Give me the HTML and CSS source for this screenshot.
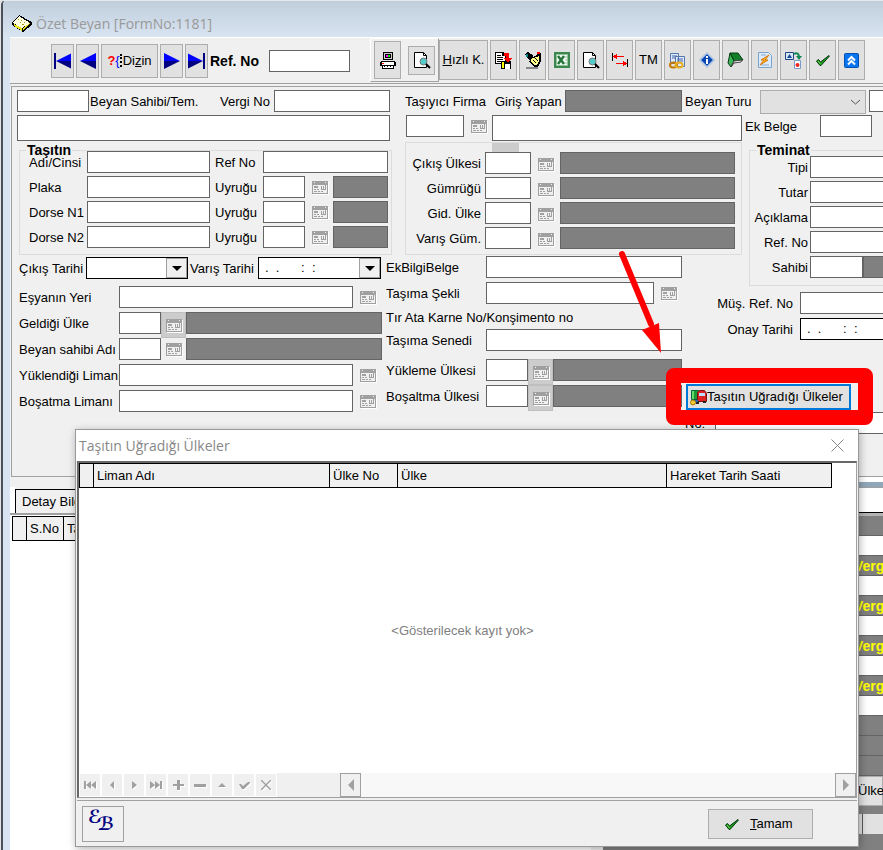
FILE: index.html
```html
<!DOCTYPE html>
<html lang="tr">
<head>
  <meta charset="UTF-8" />
  <meta name="viewport" content="width=device-width, initial-scale=1.0"/>
  <title>Özet Beyan</title>
  <link rel="stylesheet" href="styles.css">
</head>
<body>
  <svg class="defs" aria-hidden="true">
    <symbol id="cal" viewBox="0 0 17 14">
      <path fill="#fff" d="M1 1h16v13H1z"/>
      <path fill="#a0a0a0" d="M0 0h16v13H0z"/>
      <path fill="#f0f0f0" d="M1 4h14v8H1zM2 1h1v1H2zM13 1h1v1h-1z"/>
      <path fill="#a0a0a0" d="M2 5h4v2H2zM9 5h1v4H9zM11 5h1v3h-1zM13 4h1v5h-1zM10 8h4v1h-4zM2 8h2v1H2zM5 8h2v1H5zM2 10h3v1H2zM6 10h2v1H6zM9 10h2v1H9z"/>
    </symbol>
    <symbol id="tri-left" viewBox="0 0 16 16"><path fill="#00f" d="M16 0v8H0z"/><path fill="#000080" d="M0 8h16v8z"/></symbol>
    <symbol id="tri-right" viewBox="0 0 16 16"><path fill="#00f" d="M0 0v8h16z"/><path fill="#000080" d="M0 8h16L0 16z"/></symbol>
    <symbol id="preview" viewBox="0 0 18 18">
      <path fill="#fff" stroke="#000" d="M1.500 1.500h9l3 3v12h-12z"/><path fill="none" stroke="#000" d="M10.500 1.500v3h3"/>
      <circle cx="10.500" cy="10.500" r="3.500" fill="#5cc" stroke="#777"/><path stroke="#000" stroke-width="2" d="M13 13l4 4"/>
    </symbol>
    <symbol id="check" viewBox="0 0 16 14">
      <path fill="#1c9a1c" stroke="#053a10" d="M1.500 8l2-1.500 2 2.500 8.500-6.500.5.5-8.500 9.500h-1z"/><path stroke="#7d5" d="M3 8l2.500 3"/>
    </symbol>
  </svg>

  <div class="window">
    <header class="titlebar">
      <svg width="20" height="17" viewBox="0 0 20 17" shape-rendering="crispEdges">
        <path fill="#000" d="M0 8L7 0l13 7v3l-9 7L0 10z"/><path fill="#ffffe0" d="M1 8l6-7 11 7-8 5z"/><path fill="#e8e020" d="M2 9l8 4v3l-8-5zM11 13l7-5-7 8z"/>
        <path fill="#a90" d="M6 4h1v1H6zM9 5h1v1H9zM8 7h1v1H8zM12 7h1v1h-1zM10 9h2v1h-2z"/>
      </svg>
      <span>Özet Beyan [FormNo:1181]</span>
    </header>

    <nav class="toolbar">
      <div class="records">
        <button class="tb" aria-label="İlk"><svg width="17" height="16" viewBox="0 0 17 16"><path fill="#000080" d="M0 0h2v16H0z"/><use href="#tri-left" x="2" width="15" height="16"/></svg></button>
        <button class="tb" aria-label="Önceki"><svg width="16" height="16"><use href="#tri-left"/></svg></button>
        <button class="tb tb-index"><b class="q">?</b><span class="brace">{</span><span class="dots"></span>Di<u>z</u>in</button>
        <button class="tb" aria-label="Sonraki"><svg width="16" height="16"><use href="#tri-right"/></svg></button>
        <button class="tb" aria-label="Son"><svg width="17" height="16" viewBox="0 0 17 16"><use href="#tri-right" width="15" height="16"/><path fill="#000080" d="M15 0h2v16h-2z"/></svg></button>
        <label class="ref-label" for="refno">Ref. No</label>
        <input class="field ref-input" id="refno" type="text">
      </div>
      <div class="print-group">
        <button class="tb print" aria-label="Yazdır">
          <svg width="16" height="17" viewBox="0 0 16 17" shape-rendering="crispEdges"><path d="M3 0h10v8H3z"/><path fill="#ccc" d="M4 1h8v6H4z"/><path fill="#000" d="M5 2h6v4H5z"/><path fill="#f0f" d="M6 3h2v2H6z"/><path fill="#0f0" d="M8 3h2v2H8z"/><path d="M1 9h14v1h1v4h-2v3H2v-3H0v-4h1z"/><path fill="#fff" d="M2 10h12v3H2zM3 14h10v2H3z"/><path fill="red" d="M2 11h2v1H2z"/><path d="M4 14h1v1H4zM7 14h1v1H7zM10 14h1v1h-1z"/></svg>
        </button>
        <button class="tb preview" aria-label="Ön izleme"><svg width="18" height="18"><use href="#preview"/></svg></button>
      </div>
      <div class="tools">
        <button class="tb tb-quick"><u>H</u>ızlı K.</button>
        <button class="tb" aria-label="Aktar">
          <svg width="17" height="17" viewBox="0 0 17 17" shape-rendering="crispEdges"><path d="M0 0h8l3 3v9H0z"/><path fill="#fff" d="M1 1h6v3h3v7H1z"/><path d="M2 3h4v1H2zM2 5h6v1H2zM2 7h6v1H2zM2 9h6v1H2z"/><path d="M6 9h10v8H6z"/><path fill="#fff" d="M10 12h5v5h-5z"/><path fill="#ff0" d="M7 10h2v6H7z"/><path fill="red" d="M9 1h5v5h3l-4 5-4-5h2V4H9z"/></svg>
        </button>
        <button class="tb" aria-label="Düzenle">
          <svg width="16" height="17" viewBox="0 0 16 17" shape-rendering="crispEdges"><path d="M0 2l3-2 5 3v4L4 8zM6 6l4-2 3-3h3v8l-3 6H9L4 10z"/><path fill="#ff8" d="M6 7l5-2 3-1v5l-2 4H9L6 10z"/><path d="M8 8l3 2v1L8 9zM10 6l3 2v1l-3-2z"/><path fill="#088" d="M1 2h2v3H1z"/><path fill="red" d="M12 0h3v2h-3z"/><path fill="#888" d="M1 15h12v2H1z"/></svg>
        </button>
        <button class="tb" aria-label="Excel">
          <svg width="16" height="16" viewBox="0 0 16 16"><path fill="#8cc498" stroke="#3c8650" stroke-width="2" d="M1 1h14v14H1z"/><path fill="#f4faf4" d="M3 3h10v10H3z"/><path stroke="#9b9" d="M11 5h2M11 8h2M11 11h2"/><path stroke="#26743a" stroke-width="2.500" d="M4 4l6 8M10 4l-6 8"/></svg>
        </button>
        <button class="tb" aria-label="Görüntüle"><svg width="18" height="18"><use href="#preview"/></svg></button>
        <button class="tb" aria-label="Aralık">
          <svg width="16" height="14" viewBox="0 0 16 14" shape-rendering="crispEdges"><path d="M0 0h1v8H0zM15 6h1v8h-1z"/><path fill="red" d="M1 3h11v1H1zM2 2h2v3H2zM4 1h1v5H4zM4 10h11v1H4zM12 9h2v3h-2zM11 8h1v5h-1z"/></svg>
        </button>
        <button class="tb tb-tm">TM</button>
        <button class="tb" aria-label="Bağlantı">
          <svg width="17" height="17" viewBox="0 0 17 17"><path fill="#dfeaff" stroke="#57a" d="M1.500 1.500h8v10h-8zM6.500 4.500h9v10h-9z"/><path stroke="#46a" d="M3 4h5M3 6h3M8 7h6M8 9h6"/><ellipse cx="4.500" cy="13" rx="3.500" ry="2.500" fill="none" stroke="#c07800" stroke-width="2"/><ellipse cx="10" cy="13" rx="3.500" ry="2.500" fill="none" stroke="#eab020" stroke-width="2"/></svg>
        </button>
        <button class="tb" aria-label="Bilgi">
          <svg width="16" height="16" viewBox="0 0 16 16"><path fill="#d4e2f8" stroke="#9ab4d8" d="M8 .5L15.500 8 8 15.500.5 8z"/><path fill="#0c48b4" d="M8 2L14 8l-6 6-6-6z"/><path fill="#fff" d="M7 4h2v2H7zM7 7h2v5H7z"/></svg>
        </button>
        <button class="tb" aria-label="Kitap">
          <svg width="17" height="16" viewBox="0 0 17 16"><path fill="#12802a" stroke="#04380f" d="M3 1h8l5 7-9 1z"/><path fill="#3cb85a" stroke="#04380f" d="M3 1L1 11l3 4 3-6z"/><path fill="#f4f4f4" stroke="#444" d="M4 15l3-6 8-1-1 2-7 1z"/></svg>
        </button>
        <button class="tb" aria-label="Hızlı işlem">
          <svg width="14" height="16" viewBox="0 0 14 16"><path fill="#dceafa" stroke="#7aa4cc" d="M.5.5h10l3 3v12H.5z"/><path stroke="#8ac" d="M3 3h5M3 13h8"/><path fill="#fb2" stroke="#d87808" d="M11 3L3 8h3l-4 5 8-5H7z"/></svg>
        </button>
        <button class="tb" aria-label="Dönüştür">
          <svg width="17" height="17" viewBox="0 0 17 17"><path fill="#dbe8f8" stroke="#248" d="M.5.5h8v7h-8z"/><path fill="#124a9a" d="M2 6l2.500-4L7 6z"/><path fill="none" stroke="#185" stroke-width="2" d="M9 2c3-2 5 0 5 3"/><path fill="#185" d="M11 4h6l-3 4z"/><path fill="#fff" stroke="#7a9ac8" d="M9.500 8.500h6v8h-6z"/><circle cx="12.500" cy="13" r="2" fill="#e22"/></svg>
        </button>
        <button class="tb" aria-label="Onayla"><svg width="16" height="14"><use href="#check"/></svg></button>
        <button class="tb" aria-label="Yukarı">
          <svg width="15" height="15" viewBox="0 0 15 15"><rect x=".5" y=".5" width="14" height="14" rx="1" fill="#0874f0" stroke="#0450b0"/><path fill="none" stroke="#fff" stroke-width="2" d="M4 7.500L7.500 4 11 7.500M4 11.500L7.500 8l3.500 3.500"/></svg>
        </button>
      </div>
    </nav>

    <main class="form">
      <div class="line">
        <div class="seg seg-left">
          <input class="field w72" id="sahip" type="text">
          <label class="sahip" for="sahip">Beyan Sahibi/Tem.</label>
          <label class="vergi" for="vergi">Vergi No</label>
          <input class="field grow" id="vergi" type="text">
        </div>
        <label class="firma" for="firma">Taşıyıcı Firma</label>
        <label class="giris" for="giris">Giriş Yapan</label>
        <input class="field dark w117" id="giris" type="text" readonly>
        <label class="turu" for="turu">Beyan Turu</label>
        <div class="select-wrap">
          <select id="turu"><option></option></select>
          <svg width="9" height="6" viewBox="0 0 9 6"><path fill="none" stroke="#555" d="M0 1l4.500 4L9 1"/></svg>
        </div>
        <input class="field" type="text" aria-label="Tur">
      </div>
      <div class="line">
        <div class="seg seg-left"><input class="field tall grow" type="text" aria-label="Ünvan"></div>
        <div class="seg seg-mid">
          <input class="field w58" id="firma" type="text">
          <button class="cal" aria-label="Seç"><svg><use href="#cal"/></svg></button>
          <input class="field tall grow" type="text" aria-label="Firma adı">
        </div>
        <label class="ek" for="ek">Ek Belge</label>
        <input class="field w52" id="ek" type="text">
      </div>

      <div class="columns">
        <div class="main-cols">
          <div class="band">
            <fieldset class="tasitin">
              <legend>Taşıtın</legend>
              <label for="adi">Adı/Cinsi</label><input class="field" id="adi" type="text">
              <label for="tref">Ref No</label><input class="field span3" id="tref" type="text">
              <label for="plaka">Plaka</label><input class="field" id="plaka" type="text">
              <label for="uy1">Uyruğu</label><input class="field" id="uy1" type="text"><button class="cal" aria-label="Seç"><svg><use href="#cal"/></svg></button><input class="field dark" type="text" readonly aria-label="Uyruk 1">
              <label for="dn1">Dorse N1</label><input class="field" id="dn1" type="text">
              <label for="uy2">Uyruğu</label><input class="field" id="uy2" type="text"><button class="cal" aria-label="Seç"><svg><use href="#cal"/></svg></button><input class="field dark" type="text" readonly aria-label="Uyruk 2">
              <label for="dn2">Dorse N2</label><input class="field" id="dn2" type="text">
              <label for="uy3">Uyruğu</label><input class="field" id="uy3" type="text"><button class="cal" aria-label="Seç"><svg><use href="#cal"/></svg></button><input class="field dark" type="text" readonly aria-label="Uyruk 3">
            </fieldset>
            <div class="gumruk">
              <div class="stub"></div>
              <label for="cu">Çıkış Ülkesi</label><input class="field" id="cu" type="text"><button class="cal" aria-label="Seç"><svg><use href="#cal"/></svg></button><input class="field dark" type="text" readonly aria-label="Çıkış ülke adı">
              <label for="gu">Gümrüğü</label><input class="field" id="gu" type="text"><button class="cal" aria-label="Seç"><svg><use href="#cal"/></svg></button><input class="field dark" type="text" readonly aria-label="Gümrük adı">
              <label for="gi">Gid. Ülke</label><input class="field" id="gi" type="text"><button class="cal" aria-label="Seç"><svg><use href="#cal"/></svg></button><input class="field dark" type="text" readonly aria-label="Gidilen ülke adı">
              <label for="vg">Varış Güm.</label><input class="field" id="vg" type="text"><button class="cal" aria-label="Seç"><svg><use href="#cal"/></svg></button><input class="field dark" type="text" readonly aria-label="Varış gümrük adı">
            </div>
          </div>

          <div class="band">
            <div class="lower-left">
              <div class="row dates">
                <label for="ct">Çıkış Tarihi</label>
                <div class="date"><input id="ct" type="text"><button aria-label="Takvim"><i class="down"></i></button></div>
                <label for="vt">Varış Tarihi</label>
                <div class="date grow"><input id="vt" type="text" value=".  .      :  :"><button aria-label="Takvim"><i class="down"></i></button></div>
              </div>
              <div class="row"><label for="ey">Eşyanın Yeri</label><input class="field w234" id="ey" type="text"><button class="cal" aria-label="Seç"><svg><use href="#cal"/></svg></button></div>
              <div class="row"><label for="gl">Geldiği Ülke</label><input class="field w42" id="gl" type="text"><button class="cal raised" aria-label="Seç"><svg><use href="#cal"/></svg></button><input class="field dark w196" type="text" readonly aria-label="Ülke adı"></div>
              <div class="row"><label for="bs">Beyan sahibi Adı</label><input class="field w42" id="bs" type="text"><button class="cal narrow" aria-label="Seç"><svg><use href="#cal"/></svg></button><input class="field dark w196" type="text" readonly aria-label="Sahip adı"></div>
              <div class="row"><label for="yl">Yüklendiği Limanı</label><input class="field w234" id="yl" type="text"><button class="cal" aria-label="Seç"><svg><use href="#cal"/></svg></button></div>
              <div class="row"><label for="bl">Boşatma Limanı</label><input class="field w234" id="bl" type="text"><button class="cal" aria-label="Seç"><svg><use href="#cal"/></svg></button></div>
            </div>
            <div class="lower-mid">
              <div class="row"><label for="eb">EkBilgiBelge</label><input class="field w196" id="eb" type="text"></div>
              <div class="row"><label for="ts">Taşıma Şekli</label><input class="field w168" id="ts" type="text"><button class="cal" aria-label="Seç"><svg><use href="#cal"/></svg></button></div>
              <div class="row caption">Tır Ata Karne No/Konşimento no</div>
              <div class="row senet"><label for="se">Taşıma Senedi</label><input class="field w196" id="se" type="text"></div>
              <div class="row"><label for="yu">Yükleme Ülkesi</label><input class="field w42" id="yu" type="text"><button class="cal raised" aria-label="Seç"><svg><use href="#cal"/></svg></button><input class="field dark grow" type="text" readonly aria-label="Yükleme ülke adı"></div>
              <div class="row"><label for="bu">Boşaltma Ülkesi</label><input class="field w42" id="bu" type="text"><button class="cal raised" aria-label="Seç"><svg><use href="#cal"/></svg></button><input class="field dark grow" type="text" readonly aria-label="Boşaltma ülke adı"></div>
            </div>
          </div>
        </div>

        <div class="right-col">
          <fieldset class="teminat">
            <legend>Teminat</legend>
            <label for="tip">Tipi</label><input class="field span2" id="tip" type="text">
            <label for="tutar">Tutar</label><input class="field span2" id="tutar" type="text">
            <label for="acik">Açıklama</label><input class="field span2" id="acik" type="text">
            <label for="rf">Ref. No</label><input class="field span2" id="rf" type="text">
            <label for="sh">Sahibi</label><input class="field" id="sh" type="text"><input class="field dark" type="text" readonly aria-label="Sahip">
          </fieldset>
          <div class="row"><label for="mr">Müş. Ref. No</label><input class="field grow" id="mr" type="text"></div>
          <div class="row"><label for="ot">Onay Tarihi</label><div class="date grow"><input id="ot" type="text" value=".  .      :  :"></div></div>
          <button class="countries">
            <svg width="17" height="17" viewBox="0 0 17 17"><path fill="#1d9a35" stroke="#064" d="M1.500 1.500h7v9h-7z"/><path fill="#6d6" d="M2 2h2v8H2z"/><path fill="#d22" stroke="#711" d="M7.500 3.500l2-2h5l2 3v8h-9z"/><path fill="#bdf" d="M9 4h6v3H9z"/><path fill="#222" d="M6 12h3v3H6zM13 12h3v2h-3z"/><path fill="#26b" d="M4 11h4v2H4z"/><circle cx="3" cy="13.500" r="2.500" fill="#ec3" stroke="#a70"/></svg>Taşıtın Uğradığı Ülkeler
          </button>
          <div class="row no"><label for="no">No:</label><input class="field grow" id="no" type="text"></div>
        </div>
      </div>
    </main>

    <section class="detail">
      <div class="detail-left">
        <div class="tabs"><button class="tab">Detay Bilgi</button></div>
        <table class="lines"><thead><tr><th class="mark"></th><th class="sno">S.No</th><th>Tanım</th></tr></thead></table>
      </div>
      <div class="detail-right">
        <div class="strip"></div>
        <div class="head-space"></div>
        <div class="tax"></div>
        <div class="blank"></div>
        <div class="tax">Ver<u>g</u>i</div>
        <div class="blank"></div>
        <div class="tax">Ver<u>g</u>i</div>
        <div class="blank"></div>
        <div class="tax">Ver<u>g</u>i</div>
        <div class="blank"></div>
        <div class="tax">Ver<u>g</u>i</div>
        <div class="blank"></div>
        <div class="tax"></div>
        <div class="tax"></div>
        <div class="tax"></div>
        <button class="ulke">Ülkeler</button>
        <div class="status"></div>
      </div>
    </section>

    <section class="dialog" role="dialog" aria-labelledby="dlg">
      <header class="dialog-title">
        <h1 id="dlg">Taşıtın Uğradığı Ülkeler</h1>
        <button aria-label="Kapat"><svg width="13" height="13" viewBox="0 0 13 13"><path stroke="#888" d="M.5.5l12 12M12.500.5l-12 12"/></svg></button>
      </header>
      <div class="grid-box">
        <table class="ports">
          <thead><tr><th class="mark"></th><th class="c-port">Liman Adı</th><th class="c-no">Ülke No</th><th class="c-country">Ülke</th><th class="c-date">Hareket Tarih Saati</th></tr></thead>
        </table>
        <p class="empty">&lt;Gösterilecek kayıt yok&gt;</p>
        <div class="navigator">
          <button aria-label="İlk kayıt"><svg viewBox="0 0 14 10"><path d="M1 1h2v8H1zM8 1v8L3 5zM13 1v8L8 5z"/></svg></button>
          <button aria-label="Önceki kayıt"><svg viewBox="0 0 14 10"><path d="M9 1v8L5 5z"/></svg></button>
          <button aria-label="Sonraki kayıt"><svg viewBox="0 0 14 10"><path d="M5 1v8l5-4z"/></svg></button>
          <button aria-label="Son kayıt"><svg viewBox="0 0 14 10"><path d="M1 1v8l5-4zM6 1v8l5-4zM11 1h2v8h-2z"/></svg></button>
          <button aria-label="Ekle"><svg viewBox="0 0 14 10"><path d="M6 0h3v4h4v2H9v4H6V6H2V4h4z"/></svg></button>
          <button aria-label="Sil"><svg viewBox="0 0 14 10"><path d="M1 4h12v3H1z"/></svg></button>
          <button aria-label="Değiştir"><svg viewBox="0 0 14 10"><path d="M3 7l4-4 4 4z"/></svg></button>
          <button aria-label="Kaydet"><svg viewBox="0 0 14 10"><path d="M2 4h2l2 2 5-4h2v1L7 9H5z"/></svg></button>
          <button aria-label="Vazgeç"><svg viewBox="0 0 14 10"><path d="M2 0h1l4 4 4-4h1v1L8 5l4 4v1h-1L7 6l-4 4H2V9l4-4-4-4z"/></svg></button>
          <span class="nav-fill"></span>
          <button class="scroll" aria-label="Sola kaydır"><i class="left"></i></button>
          <span class="track"></span>
          <button class="scroll" aria-label="Sağa kaydır"><i class="right"></i></button>
        </div>
      </div>
      <footer class="dialog-foot">
        <div class="logo"><span>ℰ</span><span class="low">ℬ</span></div>
        <button class="ok"><svg width="16" height="14"><use href="#check"/></svg><span><u>T</u>amam</span></button>
      </footer>
    </section>

    <div class="callout"></div>
    <svg class="arrow" width="50" height="110" viewBox="0 0 50 110"><path stroke="red" stroke-width="6" stroke-linecap="round" d="M8 9l29 70"/><path fill="red" d="M28 85l17-7 2 30z"/></svg>
  </div>
</body>
</html>
```
FILE: styles.css
```css
:root {
  --face: #f0f0f0;
  --btn: #e1e1e1;
  --line: #a0a0a0;
  --edge: #646464;
  --dark: #808080;
}

* {
  box-sizing: border-box;
}

body {
  margin: 0;
  font: 13px/16px "Liberation Sans", Arial, sans-serif;
  color: #000;
  background: #dfe3e8;
}

button, input, select {
  font: inherit;
  color: inherit;
  margin: 0;
  padding: 0;
  border-radius: 0;
}

label, button {
  white-space: nowrap;
}

.defs {
  position: absolute;
  width: 0;
  height: 0;
}

.window {
  position: relative;
  display: flex;
  flex-direction: column;
  height: 100vh;
  margin-left: 1px;
  padding-left: 7px;
  border-left: 2px solid #4d5157;
  border-top: 1px solid #e4e9ee;
  border-top-left-radius: 5px;
  background: #d8e4f1;
  overflow: hidden;
}

.titlebar {
  display: flex;
  flex: none;
  align-items: center;
  gap: 4px;
  height: 36px;
  margin-left: -7px;
  padding: 9px 0 0 9px;
  background: linear-gradient(#c0cddb, #d8e4f1);
  color: #999;
  font: 14px/20px "Open Sans", sans-serif;
}

/* toolbar */
.toolbar {
  display: flex;
  flex: none;
  height: 47px;
  background: var(--face);
  border-top: 1px solid #fff;
  border-bottom: 1px solid var(--line);
}

.records {
  display: flex;
  flex: none;
  align-items: center;
  gap: 2px;
  width: 360px;
  padding-left: 41px;
}

.tb {
  display: flex;
  flex: none;
  align-items: center;
  justify-content: center;
  width: 27px;
  height: 40px;
  background: var(--btn);
  border: 1px solid #adadad;
}

.records .tb {
  width: 23px;
  height: 34px;
}

.records .tb-index {
  width: 57px;
}

.q {
  color: red;
}

.brace {
  color: #00f;
}

.dots {
  height: 13px;
  border-left: 2px dotted #000;
  margin-right: 1px;
}

.ref-label {
  width: 57px;
  font-weight: bold;
  font-size: 14px;
}

.ref-input {
  width: 81px;
  height: 25px;
}

.print-group {
  display: flex;
  align-items: center;
  gap: 7px;
  height: 44px;
  padding: 0 3px;
  border: 1px solid var(--line);
  border-top-color: #fff;
  border-left-color: #fff;
}

.tb.print {
  height: 38px;
}

.tb.preview {
  height: 29px;
}

.tools {
  display: flex;
  gap: 2px;
  padding-top: 2px;
}

.tools .tb-quick {
  width: 49px;
}

/* form */
.form {
  flex: none;
  display: flex;
  flex-direction: column;
  height: 391px;
  margin-top: 2px;
  padding: 3px 0 0 5px;
  margin-left: 1px;
  border: 1px solid var(--line);
  border-right: 0;
  background: var(--face);
  box-shadow: 0 -2px 0 var(--face), -1px 0 0 var(--face);
  overflow: hidden;
}

.line, .seg, .row, .band, .columns {
  display: flex;
  flex: none;
}

.line {
  align-items: flex-start;
  height: 25px;
}

.line + .line {
  height: 26px;
}

.line label {
  flex: none;
  line-height: 24px;
}

.seg-left {
  width: 373px;
}

.seg-mid {
  width: 336px;
  margin-left: 16px;
}

.field {
  flex: none;
  height: 22px;
  min-width: 0;
  border: 1px solid var(--edge);
  background: #fff;
}

.field.dark {
  background: var(--dark);
}

.field.tall {
  height: 26px;
}

.field.grow, .grow {
  flex: 1;
}

.w42 { width: 42px; }
.w52 { width: 52px; }
.w58 { width: 58px; }
.w72 { width: 72px; }
.w117 { width: 117px; }
.w168 { width: 168px; }
.w196 { width: 196px; }
.w234 { width: 234px; }

.sahip {
  width: 131px;
  padding-left: 1px;
}

.vergi {
  width: 54px;
}

.firma {
  width: 90px;
  margin-left: 15px;
}

.giris {
  width: 70px;
}

.turu, .ek {
  width: 78px;
  padding-left: 3px;
}

.select-wrap {
  display: grid;
  flex: none;
  width: 106px;
  height: 24px;
  margin-right: 3px;
}

.select-wrap select, .select-wrap svg {
  grid-area: 1 / 1;
}

.select-wrap select {
  appearance: none;
  width: 100%;
  background: var(--btn);
  border: 1px solid #adadad;
}

.select-wrap svg {
  place-self: center end;
  margin-right: 6px;
}

.cal {
  display: flex;
  flex: none;
  align-items: center;
  justify-content: center;
  width: 28px;
  height: 22px;
  padding-left: 2px;
  border: 0;
  background: none;
}

.cal svg {
  width: 17px;
  height: 14px;
  margin-top: 1px;
  shape-rendering: crispEdges;
}

.cal.narrow {
  width: 25px;
}

.cal.raised {
  width: 25px;
  height: 26px;
  background: #ccc;
  border: 1px solid #bfbfbf;
}

.main-cols {
  width: 726px;
  flex: none;
  padding-left: 2px;
}

.band {
  height: 114px;
}

.tasitin {
  display: grid;
  grid-template-columns: 58px 123px 53px 42px 28px 55px;
  grid-auto-rows: 22px;
  row-gap: 3px;
  width: 373px;
  margin: 8px 13px 0 0;
  padding: 0 3px 5px 9px;
  height: 106px;
  border: 1px solid #dcdcdc;
}

.tasitin label, .gumruk label, .teminat label {
  line-height: 24px;
}

.tasitin .field + label {
  padding-left: 5px;
}

.tasitin .dark + label, .tasitin .span3 + label {
  padding-left: 0;
}

legend {
  height: 2px;
  line-height: 2px;
  padding: 0 1px;
  margin-left: -3px;
  font-weight: bold;
  font-size: 14px;
}

.span3 {
  grid-column: span 3;
}

.span2 {
  grid-column: span 2;
}

.gumruk {
  display: grid;
  grid-template-columns: 79px 46px 29px 175px;
  grid-template-rows: 9px;
  grid-auto-rows: 22px;
  row-gap: 3px;
  width: 337px;
  height: 113px;
  margin-top: 1px;
  border: 1px solid #dcdcdc;
}

.gumruk label {
  padding-right: 4px;
  text-align: right;
}

.stub {
  grid-column: 1 / -1;
  width: 27px;
  margin-left: 86px;
  background: #ccc;
}

.gumruk .field, .gumruk .cal, .gumruk label {
  margin-top: -3px;
}

.gumruk .cal {
  margin-top: -2px;
}

.lower-left, .lower-mid {
  display: flex;
  flex-direction: column;
  gap: 4px;
}

.lower-left {
  width: 367px;
  padding-top: 2px;
}

.lower-mid {
  width: 296px;
  padding-top: 1px;
}

.row {
  height: 22px;
}

.row label {
  flex: none;
  width: 100px;
  line-height: 24px;
  overflow: hidden;
}

.dates {
  width: 362px;
  margin-bottom: 3px;
}

.dates label {
  width: 67px;
}

.dates .date + label {
  width: 70px;
  padding-left: 2px;
}

.date {
  display: flex;
  flex: none;
  width: 102px;
  height: 22px;
  border: 1px solid #000;
  background: #fff;
}

.date.grow {
  flex: 1;
  min-width: 0;
}

.date input {
  flex: 1;
  width: 0;
  min-width: 0;
  padding-left: 6px;
  border: 0;
  background: none;
  white-space: pre;
}

.date button {
  display: flex;
  flex: none;
  align-items: center;
  justify-content: center;
  width: 21px;
  background: var(--face);
  border: 1px solid var(--line);
}

.down {
  border: 5px solid transparent;
  border-top-color: #000;
  border-bottom: 0;
}

.row.caption {
  height: 17px;
  line-height: 20px;
}

.senet {
  margin-bottom: 4px;
}

.right-col {
  flex: 1;
  min-width: 0;
  padding: 8px 0 0 6px;
}

.teminat {
  display: grid;
  grid-template-columns: 60px 53px 1fr;
  grid-auto-rows: 22px;
  row-gap: 3px;
  height: 137px;
  margin: 0 -8px 6px 0;
  padding: 5px 0 6px;
  border: 1px solid #dcdcdc;
}

.teminat legend {
  margin-left: 6px;
}

.teminat label {
  padding-right: 2px;
  text-align: right;
}

/* these rows start left of the Teminat group */
.right-col .row {
  margin: 0 -8px 4px -34px;
}

.right-col .row label {
  width: 85px;
  padding-right: 7px;
  text-align: right;
}

.countries {
  display: flex;
  align-items: center;
  width: 165px;
  height: 26px;
  margin: 44px 0 2px -63px;
  padding-left: 2px;
  background: var(--btn);
  border: 2px solid #0078d7;
}

.right-col .row.no {
  margin-left: -64px;
}

.right-col .no label {
  width: 30px;
  padding: 0;
  text-align: left;
}

/* area behind the dialog */
.detail {
  display: flex;
  flex: 1;
  min-height: 0;
  background: var(--face);
}

.detail-left {
  flex: 1;
  display: flex;
  flex-direction: column;
  margin-top: 10px;
  background: #fff;
  border-right: 12px solid var(--face);
}

.tabs {
  display: flex;
  height: 28px;
  padding: 2px 0 0 5px;
  border-bottom: 2px solid var(--line);
  background: linear-gradient(90deg, #fff 5px, var(--face) 5px);
}

.tab {
  padding: 0 6px;
  background: var(--face);
  border: 1px solid #000;
  border-bottom: 0;
}

table {
  border-collapse: collapse;
}

th {
  height: 24px;
  padding: 0 3px;
  background: var(--face);
  border: 1px solid #000;
  font-weight: normal;
  text-align: left;
  white-space: nowrap;
}

.lines {
  width: 400px;
  margin: 1px 0 0 2px;
}

.mark {
  width: 14px;
}

.sno {
  width: 37px;
}

.detail-right {
  width: 280px;
  overflow: hidden;
  background: var(--dark);
}

.strip {
  height: 10px;
  border-top: 5px solid #fff;
  background: #91a7b8;
}

.head-space {
  height: 29px;
  background: #fff;
  border-top: 1px solid var(--line);
  box-shadow: inset 0 -3px 0 #b4b4b4, inset 0 -4px 0 #000;
}

.tax {
  height: 20px;
  padding-left: 251px;
  border-bottom: 1px solid var(--edge);
  background: var(--dark);
  color: #ff0;
  font-weight: bold;
  font-size: 14px;
  line-height: 20px;
}

.blank {
  height: 20px;
  background: #fff;
  border-bottom: 1px solid var(--edge);
}

.ulke {
  display: block;
  width: 100%;
  height: 30px;
  padding-left: 254px;
  border: 1px solid #adadad;
  background: var(--btn);
  text-align: left;
}

.status {
  height: 20px;
  margin-top: 8px;
  background: linear-gradient(90deg, var(--btn) 259px, #555 259px, #555 260px, var(--btn) 260px);
}

/* dialog window */
.dialog {
  position: absolute;
  top: 428px;
  right: 24px;
  bottom: 3px;
  left: 72px;
  display: flex;
  flex-direction: column;
  border: 1px solid #999;
  background: var(--face);
  box-shadow: 1px 2px 8px rgba(0, 0, 0, 0.3);
}

.dialog-title {
  display: flex;
  align-items: center;
  justify-content: space-between;
  height: 31px;
  padding: 0 14px 0 3px;
  background: #fff;
  color: #888;
}

.dialog-title h1 {
  margin: 0;
  font: 14px/20px "Open Sans", sans-serif;
}

.dialog-title button {
  display: flex;
  border: 0;
  background: none;
}

.grid-box {
  display: flex;
  flex-direction: column;
  flex: 1;
  margin: 0 1px;
  border: 2px solid #696969;
  border-right: 1px solid var(--line);
  border-bottom: 1px solid var(--line);
  background: #fff;
}

.ports {
  width: 753px;
  table-layout: fixed;
}

.c-port { width: 236px; }
.c-no { width: 68px; }
.c-country { width: 269px; }

.empty {
  display: flex;
  flex: 1;
  align-items: center;
  justify-content: center;
  margin: 0;
  padding-right: 10px;
  color: #808080;
}

.navigator {
  display: flex;
  height: 24px;
}

.navigator button {
  display: flex;
  align-items: center;
  justify-content: center;
  width: 22px;
  background: var(--face);
  border: 1px solid #fff;
}

.navigator svg {
  width: 14px;
  height: 10px;
  fill: #a0a0a0;
  filter: drop-shadow(1px 1px 0 #fff);
}

.nav-fill {
  width: 63px;
  background: var(--face);
}

.navigator .scroll {
  width: 21px;
  border-color: var(--line);
}

.left, .right {
  border: 6px solid transparent;
}

.left {
  border-right-color: var(--line);
  border-left: 0;
}

.right {
  border-left-color: var(--line);
  border-right: 0;
}

.track {
  flex: 1;
  background: #f8f8f8;
}

.dialog-foot {
  display: flex;
  align-items: center;
  justify-content: space-between;
  height: 46px;
  margin: 2px 1px 0;
  padding: 0 44px 0 5px;
  border-top: 1px solid var(--line);
}

.logo {
  display: flex;
  width: 42px;
  height: 36px;
  padding-left: 5px;
  border: 1px solid var(--line);
  color: #000080;
  font: bold 18px/20px "DejaVu Sans", sans-serif;
}

.logo .low {
  margin: 7px 0 0 -4px;
}

.ok {
  display: flex;
  align-items: center;
  gap: 10px;
  width: 105px;
  height: 30px;
  padding-left: 15px;
  background: var(--btn);
  border: 1px solid #adadad;
}

/* red marker and arrow over the form */
.callout {
  position: absolute;
  top: 367px;
  left: 663px;
  width: 207px;
  height: 57px;
  border: 15px solid red;
  border-radius: 8px;
}

.callout, .arrow {
  pointer-events: none;
}

.arrow {
  position: absolute;
  top: 244px;
  left: 611px;
}
```
